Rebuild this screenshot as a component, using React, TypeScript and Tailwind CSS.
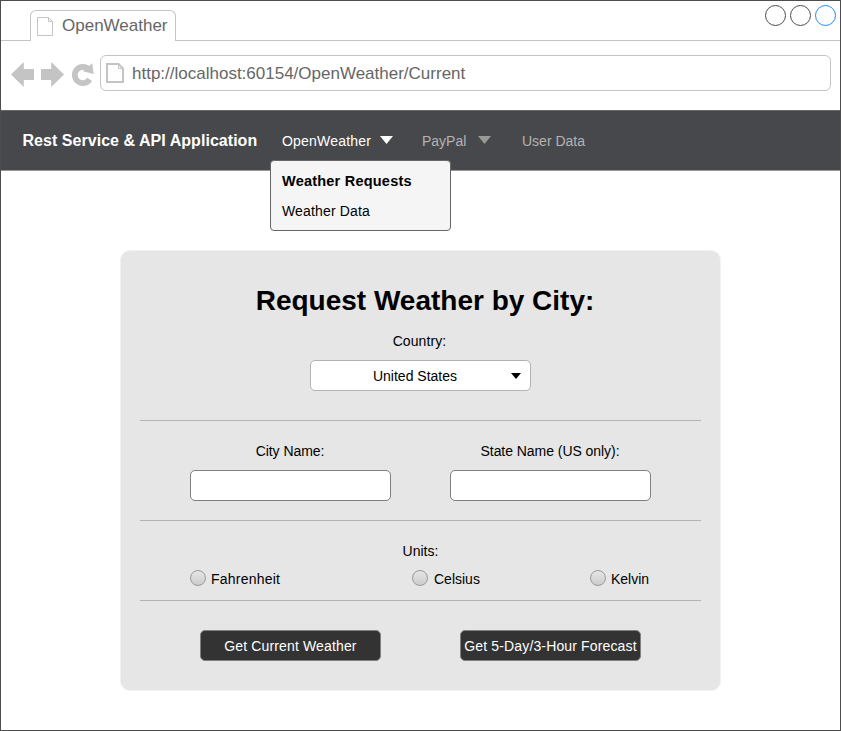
import type { ReactNode } from "react";

function PageIcon() {
  return (
    <svg className="h-5 w-[18px] shrink-0" viewBox="0 0 18 20" fill="none" stroke="#c4c4c4" strokeWidth="2">
      <path d="M1 1H12.5L17 5.5V19H1Z" />
      <path d="M12.5 1V5.5H17" strokeWidth="1" />
    </svg>
  );
}

function TabPageIcon() {
  return (
    <svg className="h-5 w-[17px] shrink-0" viewBox="0 0 17 20" fill="none" stroke="#c4c4c4">
      <path d="M.5 .5H11.5L15.5 4.5V18.5H.5Z" />
      <path d="M11.5 .5V4.5H15.5" />
    </svg>
  );
}

function NavIcons() {
  return (
    <svg className="h-7 w-[84px] shrink-0" viewBox="0 0 84 28" fill="#c4c4c4">
      <path d="M0 13.5 12.8 1V8H23V19H12.8V26Z" />
      <path d="M53 13.5 40.2 1V8H30V19H40.2V26Z" />
      <path d="M78.7 18.4A8.1 8.1 0 1 1 77.6 8.2" fill="none" stroke="#c4c4c4" strokeWidth="5.7" />
      <path d="M81.2 2.3 82.7 13 71.8 10.2Z" />
    </svg>
  );
}

function Caret({ className }: { className: string }) {
  return (
    <svg className={className} viewBox="0 0 12 8" preserveAspectRatio="none" fill="currentColor">
      <path d="M0 0H12L6 8Z" />
    </svg>
  );
}

function Radio({ label, width, text }: { label: string; width: string; text: string }) {
  return (
    <label className={`flex h-[18px] items-start ${width}`}>
      <span className="size-4 shrink-0 rounded-full border border-[#999] bg-linear-to-b from-[#e6e6e6] to-[#cccccc]" />
      <span className={`pt-px leading-4 ${text}`}>{label}</span>
    </label>
  );
}

function TextField({ label }: { label: string }) {
  return (
    <label className="flex w-[201px] flex-col text-center">
      <span className="h-[27px] pr-px leading-4 tracking-[-0.05px]">{label}</span>
      <input className="h-[31px] rounded-[5px] border border-[#808080] bg-white px-2" />
    </label>
  );
}

function ActionButton({ children }: { children: ReactNode }) {
  return (
    <button className="flex h-[31px] w-[181px] items-start justify-center rounded-[5px] border border-[#808080] bg-[#333] leading-[31px] tracking-[0.14px] whitespace-nowrap text-white">
      {children}
    </button>
  );
}

export default function App() {
  return (
    <div className="flex h-[731px] w-[841px] flex-col overflow-hidden border border-[#4d4d4d] bg-white font-['Liberation_Sans',Arial,sans-serif] text-sm text-black">
      <div className="flex h-10 shrink-0 items-start">
        <div className="h-full w-[29px] border-b border-[#c4c4c4]" />
        <div className="mt-[9px] flex h-[31px] w-[146px] rounded-t-[6px] border border-b-0 border-[#c4c4c4] pt-[6px] pl-[6px] text-[17px] text-[#666]">
          <TabPageIcon />
          <span className="ml-[8px] leading-[17px]">OpenWeather</span>
        </div>
        <div className="flex h-full grow justify-end gap-1 border-b border-[#c4c4c4] pt-1 pr-1">
          <span className="size-[21px] rounded-full border border-[#4d4d4d]" />
          <span className="size-[21px] rounded-full border border-[#4d4d4d]" />
          <span className="size-[21px] rounded-full border border-[#1a8cff]" />
        </div>
      </div>

      <div className="flex h-[69px] shrink-0 items-start pt-[14px] pl-[10px]">
        <div className="pt-[6px]">
          <NavIcons />
        </div>
        <div className="ml-[5px] flex h-9 w-[731px] rounded-[6px] border border-[#c4c4c4] pt-[7px] pl-[5px] text-[17px] text-[#666]">
          <PageIcon />
          <span className="ml-[8px] leading-[22px]">http://localhost:60154/OpenWeather/Current</span>
        </div>
      </div>

      <nav className="flex h-[61px] shrink-0 items-start border-t border-b border-t-[#666] border-b-[#999] bg-[#47484c] pt-5 pl-[21px]">
        <span className="w-[260px] pl-[0.5px] text-[16px] leading-[19px] font-bold tracking-[0.04px] text-white">Rest Service &amp; API Application</span>
        <div className="relative flex w-[140px] text-white">
          <span className="w-[98px] leading-[21px] tracking-[0.2px]">OpenWeather</span>
          <Caret className="mt-[5px] h-2 w-[13px]" />
          <div className="absolute top-[29px] -left-[12px] z-10 flex h-[71px] w-[181px] flex-col rounded-[4px] border border-[#666] bg-[#f5f5f5] pt-[5px] pl-[11px] text-black">
            <span className="h-[30px] text-[14.5px] leading-[30px] font-bold tracking-[0.22px]">Weather Requests</span>
            <span className="h-[30px] leading-[30px] tracking-[0.15px]">Weather Data</span>
          </div>
        </div>
        <div className="flex w-[99px] text-[#b3b3b3]">
          <span className="w-[56px] leading-[21px]">PayPal</span>
          <Caret className="mt-[5px] h-2 w-[13px] text-[#999]" />
        </div>
        <span className="pl-px leading-[21px] text-[#b3b3b3]">User Data</span>
      </nav>

      <main className="mt-[79px] ml-[119px] flex h-[441px] w-[601px] shrink-0 flex-col rounded-[10px] border border-[#f2f2f2] bg-[#e6e6e6] px-[19px]">
        <section className="flex h-[170px] shrink-0 flex-col items-center border-b border-[#b3b3b3] pt-[34px]">
          <h1 className="h-[48px] pl-[9px] text-[28px] leading-8 font-bold">Request Weather by City:</h1>
          <div className="h-[27px] pr-[2px] leading-4 tracking-[0.1px]">Country:</div>
          <button className="flex h-[31px] w-[221px] shrink-0 items-start rounded-[5px] border border-[#b3b3b3] bg-white">
            <span className="w-[200px] pl-[8px] text-center leading-[31px]">United States</span>
            <Caret className="mt-3 h-[6px] w-[10px] shrink-0" />
          </button>
        </section>

        <section className="flex h-[100px] shrink-0 items-start gap-[59px] border-b border-[#b3b3b3] pt-[22px] pl-[50px]">
          <TextField label="City Name:" />
          <TextField label="State Name (US only):" />
        </section>

        <section className="h-20 shrink-0 border-b border-[#b3b3b3] pt-[22px]">
          <div className="h-[27px] text-center leading-4">Units:</div>
          <div className="flex pl-[50px]">
            <Radio label="Fahrenheit" width="w-[222px]" text="pl-[5px] tracking-[0.22px]" />
            <Radio label="Celsius" width="w-[178px]" text="pl-[6px]" />
            <Radio label="Kelvin" width="w-[80px]" text="pl-[5px]" />
          </div>
        </section>

        <section className="flex gap-[79px] pt-[29px] pl-[60px]">
          <ActionButton>Get Current Weather</ActionButton>
          <ActionButton>Get 5-Day/3-Hour Forecast</ActionButton>
        </section>
      </main>
    </div>
  );
}
